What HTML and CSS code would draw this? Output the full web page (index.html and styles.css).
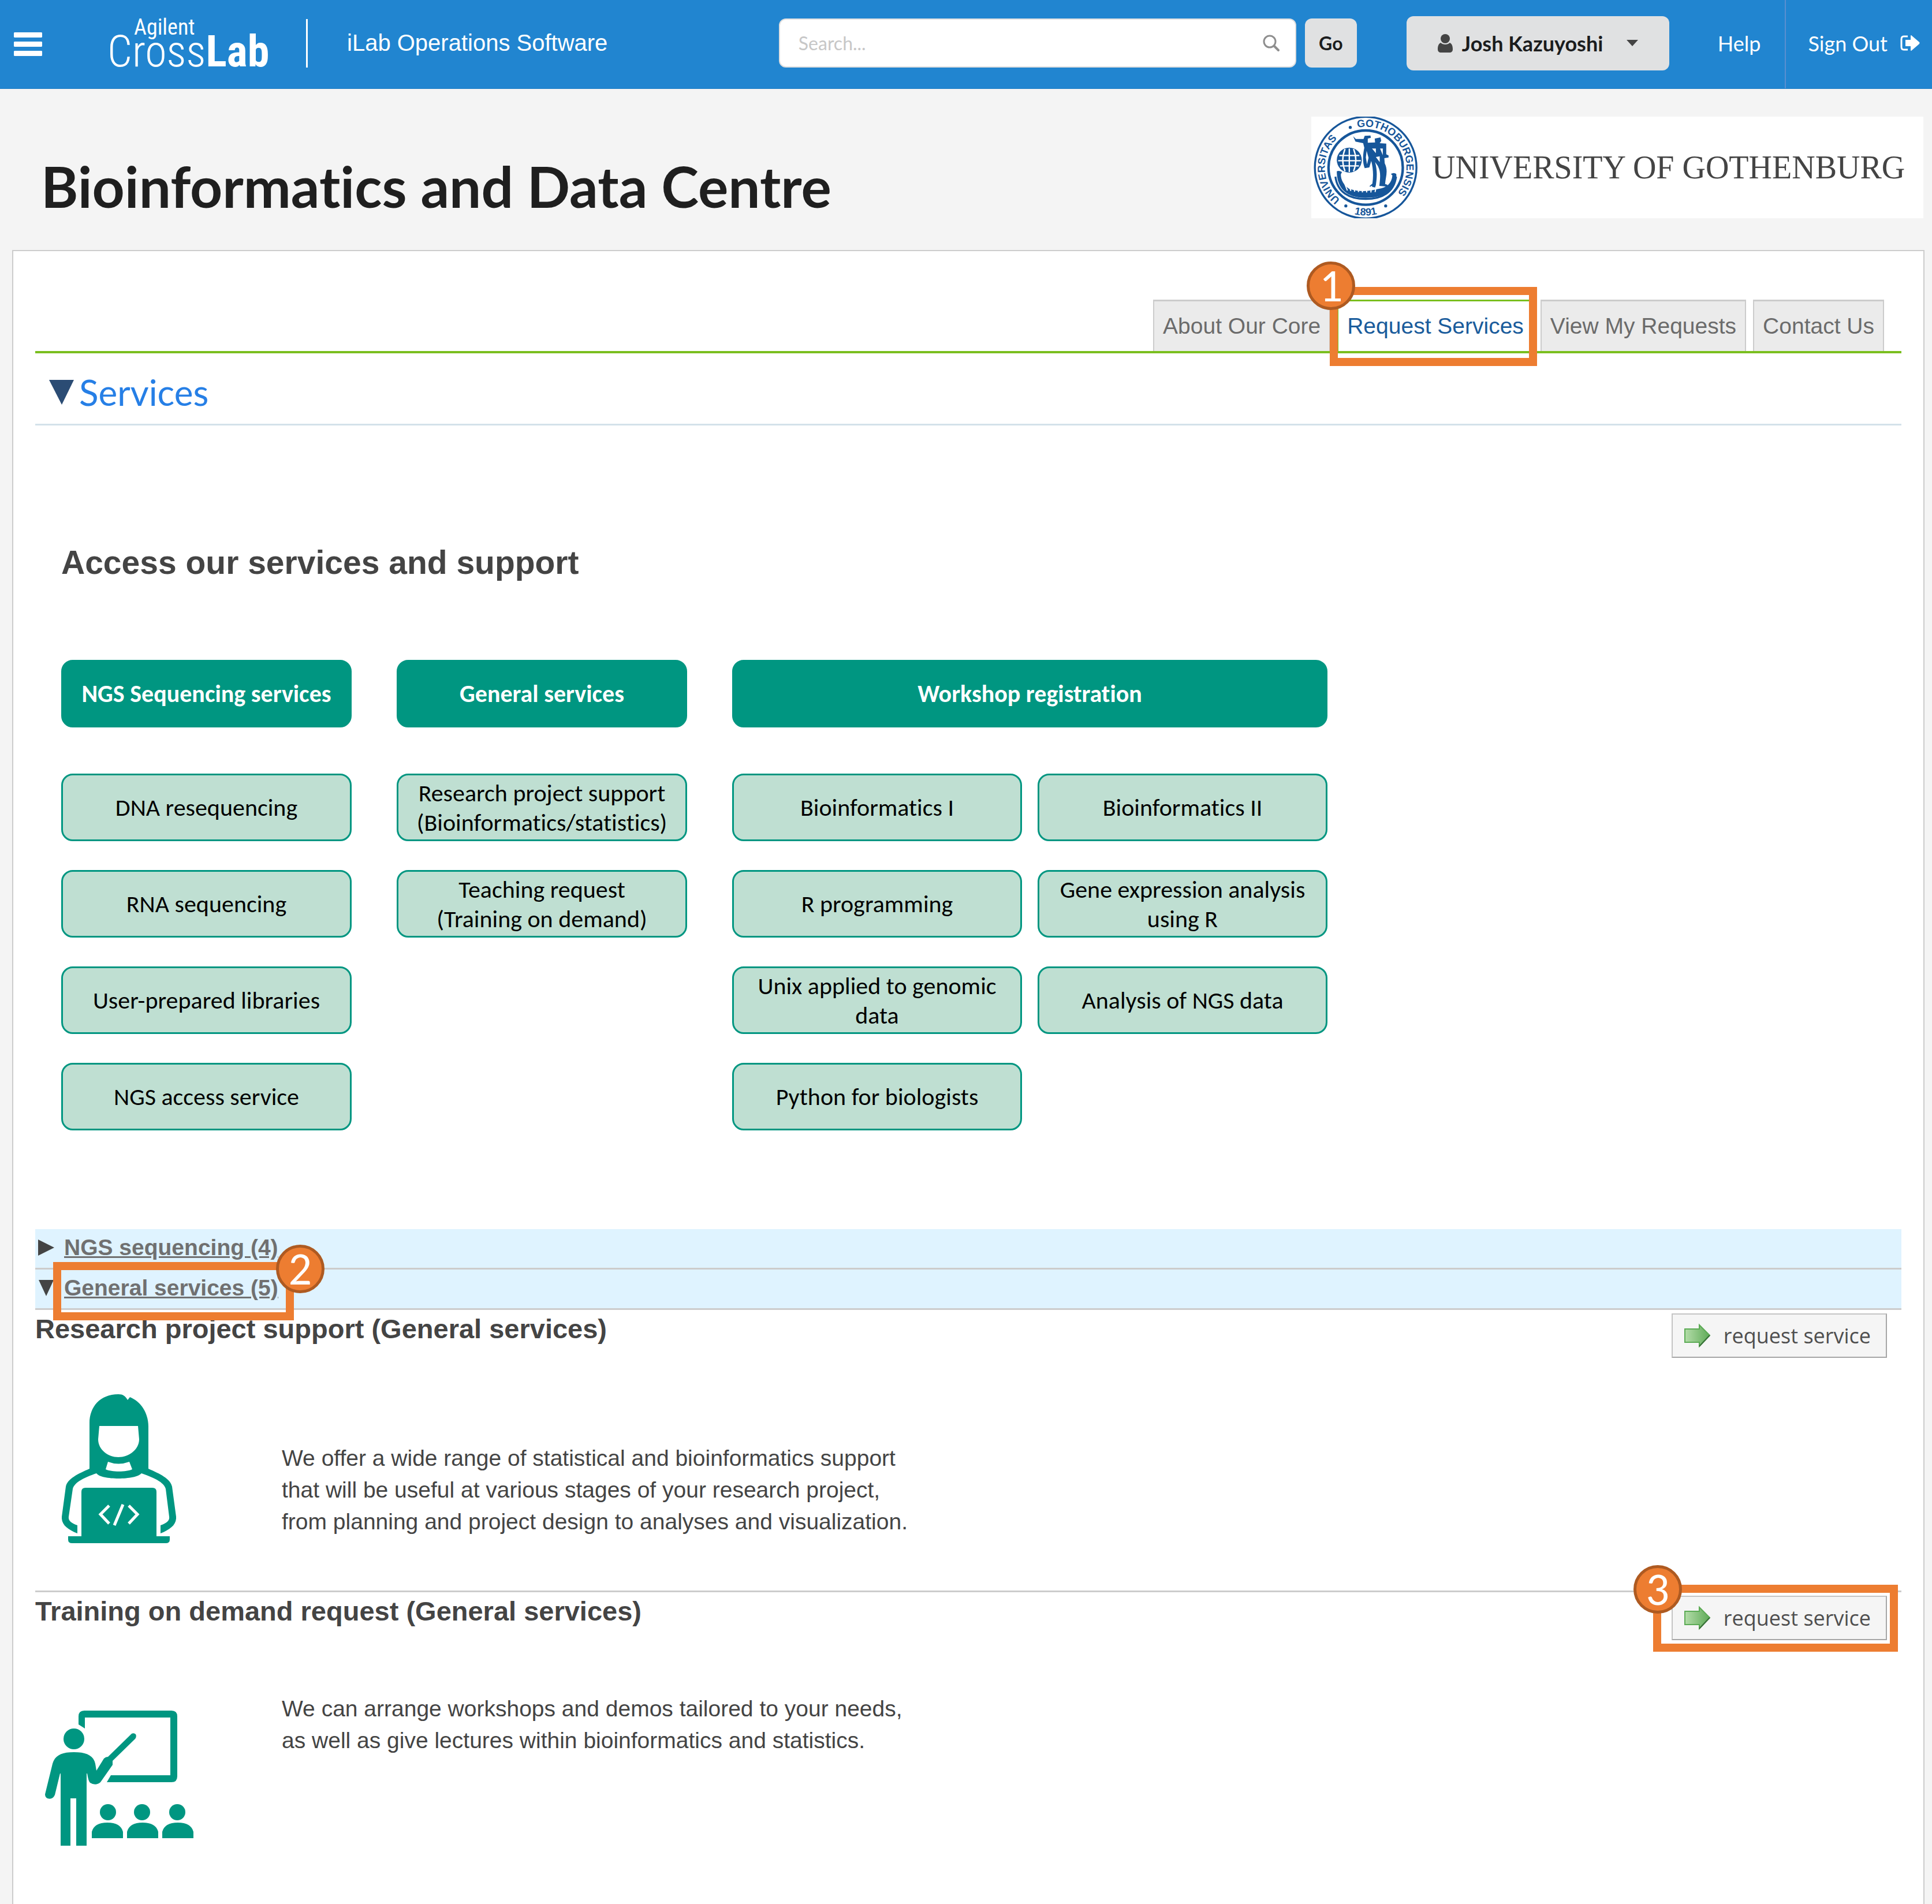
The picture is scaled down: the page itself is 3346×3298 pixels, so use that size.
FILE: index.html
```
<!DOCTYPE html>
<html lang="en">
<head>
<meta charset="utf-8">
<meta name="viewport" content="width=device-width, initial-scale=1">
<title>Bioinformatics and Data Centre - iLab Operations Software</title>
<link rel="stylesheet" href="styles.css">
</head>
<body>
<header class="topbar">
  <button class="menu-button" type="button" aria-label="Menu">
    <svg width="49" height="41" viewBox="0 0 49 41" aria-hidden="true"><path fill="#fff" d="M1 0h47l1 1v7l-1 1H1L0 8V1zM1 16h47l1 1v7l-1 1H1l-1-1v-7zM1 32h47l1 1v7l-1 1H1l-1-1v-7z"/></svg>
  </button>
  <a class="brand" href="#">
    <span class="brand-top">Agilent</span>
    <span class="brand-main">Cross<b>Lab</b></span>
  </a>
  <span class="product">iLab Operations Software</span>
  <form class="search" role="search">
    <div class="search-box">
      <input class="search-input" type="text" placeholder="Search..." aria-label="Search">
      <svg class="search-icon" width="30" height="30" viewBox="0 0 30 30" aria-hidden="true"><circle cx="12" cy="12" r="10" fill="none" stroke="#8e8e8e" stroke-width="3"/><path d="M20 20l7 7" stroke="#8e8e8e" stroke-width="4" stroke-linecap="round"/></svg>
    </div>
    <button class="go-button" type="button">Go</button>
  </form>
  <button class="user-button" type="button">
    <svg width="26" height="32" viewBox="0 0 26 32" aria-hidden="true"><ellipse cx="13" cy="8" rx="8" ry="8" fill="#444"/><path fill="#444" d="M5 15c2 2 5 3 8 3s6-1 8-3c4 2 5 7 5 11 0 4-2 6-6 6H6c-4 0-6-2-6-6 0-4 1-9 5-11z"/></svg>
    <span class="user-name">Josh Kazuyoshi</span>
    <svg width="20" height="11" viewBox="0 0 20 11" aria-hidden="true"><path fill="#444" d="M0 0h20L10 11z"/></svg>
  </button>
  <nav class="top-links">
    <a class="top-link" href="#">Help</a>
    <a class="top-link top-link-divided" href="#">Sign Out
      <svg width="34" height="28" viewBox="0 0 34 28" aria-hidden="true"><path d="M13 2H6C3 2 2 4 2 7v13c0 3 1 5 4 5h7" fill="none" stroke="#fff" stroke-width="3"/><path fill="#fff" d="M9 8h9V1q0-1 1-1l14 12q1 1 0 3L19 27q-1 0-1-1v-7H9z"/></svg>
    </a>
  </nav>
</header>

<section class="masthead">
  <h1 class="page-title">Bioinformatics and Data Centre</h1>
  <div class="university">
    <svg class="seal" width="187" height="176" viewBox="15 18 560 528" role="img" aria-label="University seal">
      <defs>
        <path id="ring" d="M297 495A212 212 0 0 1 297 71A212 212 0 0 1 297 495"/>
        <path id="ring-low" d="M48 283A249 249 0 0 0 546 283"/>
      </defs>
      <g fill="none" stroke="#16569a">
        <circle cx="297" cy="283" r="264" stroke-width="10"/>
        <circle cx="297" cy="283" r="193" stroke-width="13"/>
        <path d="M140 330C150 410 210 446 297 446S444 410 455 330" stroke-width="10"/>
      </g>
      <g class="seal-text" fill="#16569a">
        <text><textPath href="#ring" startOffset="142">UNIVERSITAS</textPath></text>
        <text><textPath href="#ring" startOffset="622">GOTHOBURGENSIS</textPath></text>
        <text text-anchor="middle"><textPath href="#ring-low" startOffset="50%">1891</textPath></text>
      </g>
      <g fill="#16569a"><circle cx="217" cy="74" r="8"/><circle cx="194" cy="482" r="8"/><circle cx="401" cy="482" r="8"/>
        <circle cx="212" cy="244" r="65"/>
        <path d="M147 302q12-6 27 4l-6 12c0 30 16 56 44 76q70 22 150 0c45-6 70-30 74-70l-8-8q16-10 28 0c6 60-30 124-159 124-100 0-150-50-150-138z"/>
        <path d="M232 120l14 14h40l6-16 30-2 2 12-16 4v22l38-2-2-20 30-6 4 18-8 12 34 2v56l12 6v10l-22 4 2 26c20 40 4 74 2 108l12 4v10l-42-4c4-40 10-70-8-104l-14-20c14 50 8 90 4 120l-4 12-30-6 16-14c6-40 4-80-6-118l-10 34-24 4c-12-30-10-70-2-106l-6-24-40-8z"/>
      </g>
      <path fill="none" stroke="#fff" stroke-width="7" d="M160 220h104M154 247h118M164 274h98M190 186q-24 58 0 116M212 184v122M234 186q24 58 0 116"/>
      <path fill="#fff" d="M302 196l10 36-8 34-6-36zM330 184h20v24zM372 184h14v34zM350 228l20-4v30z"/>
      <path fill="none" stroke="#fff" stroke-width="6" d="M178 340l24 62M206 356l14 48M232 366l8 42M256 376l4 34M280 378v34M304 378l-2 34M328 378l-4 34M352 380l-6 30"/>
    </svg>
    <span class="university-name">UNIVERSITY OF GOTHENBURG</span>
  </div>
</section>

<main class="panel">
  <nav class="tabs">
    <a class="tab" href="#">About Our Core</a>
    <a class="tab tab-active" href="#">Request Services<span class="mark mark-tab"><span class="mark-number">1</span></span></a>
    <a class="tab" href="#">View My Requests</a>
    <a class="tab" href="#">Contact Us</a>
  </nav>

  <h2 class="section-title">
    <svg width="43" height="43" viewBox="0 0 43 43" aria-hidden="true"><path fill="#2b4c74" d="M0 0h43L22 43z"/></svg>
    <a class="section-link" href="#">Services</a>
  </h2>

  <section class="access">
    <h3 class="access-title">Access our services and support</h3>
    <div class="chart">
      <div class="chart-group">
        <a class="box box-head" href="#">NGS Sequencing services</a>
        <div class="boxes">
          <a class="box" href="#">DNA resequencing</a>
          <a class="box" href="#">RNA sequencing</a>
          <a class="box" href="#">User-prepared libraries</a>
          <a class="box" href="#">NGS access service</a>
        </div>
      </div>
      <div class="chart-group">
        <a class="box box-head" href="#">General services</a>
        <div class="boxes">
          <a class="box" href="#">Research project support (Bioinformatics/statistics)</a>
          <a class="box" href="#">Teaching request<br>(Training on demand)</a>
        </div>
      </div>
      <div class="chart-group chart-group-wide">
        <a class="box box-head" href="#">Workshop registration</a>
        <div class="boxes boxes-two">
          <a class="box" href="#">Bioinformatics I</a>
          <a class="box" href="#">Bioinformatics II</a>
          <a class="box" href="#">R programming</a>
          <a class="box" href="#">Gene expression analysis using R</a>
          <a class="box" href="#">Unix applied to genomic data</a>
          <a class="box" href="#">Analysis of NGS data</a>
          <a class="box" href="#">Python for biologists</a>
        </div>
      </div>
    </div>
  </section>

  <div class="category">
    <svg width="28" height="28" viewBox="0 0 28 28" aria-hidden="true"><path fill="#444" d="M0 0l28 14L0 28z"/></svg>
    <a class="category-link" href="#">NGS sequencing (4)</a>
  </div>
  <div class="category">
    <svg width="28" height="28" viewBox="0 0 28 28" aria-hidden="true"><path fill="#444" d="M1 0h26L14 28z"/></svg>
    <a class="category-link" href="#">General services (5)<span class="mark mark-category"><span class="mark-number">2</span></span></a>
  </div>

  <article class="service">
    <div class="service-head">
      <h4 class="service-title">Research project support (General services)</h4>
      <button class="request-button" type="button">
        <svg width="46" height="43" viewBox="0 0 46 43" aria-hidden="true"><defs><linearGradient id="leaf" x1="0" x2="1"><stop offset="0" stop-color="#b4dda9"/><stop offset="1" stop-color="#5faa58"/></linearGradient></defs><path d="M1 10h25V3l18 18-18 19v-7H1z" fill="url(#leaf)" stroke="#5cab55" stroke-width="2"/><path d="M26 40l18-19" stroke="#376f37" stroke-width="2"/></svg>
        request service
      </button>
    </div>
    <div class="service-body">
      <div class="service-art">
        <svg width="198" height="258" viewBox="0 0 198 258" aria-hidden="true">
          <path fill="#009681" fill-rule="evenodd" d="M98 0C106 0 110 3 114 10L118 5C140 14 150 36 150 56V129C170 138 188 146 191 160L198 212C199 226 188 234 171 241V227C182 223 187 219 186 212L180 164C177 152 158 144 138 137C128 149 68 149 60 137C40 144 22 152 19 164L12 212C11 219 16 223 27 227V241C10 234-1 226 0 212L7 160C10 146 28 138 48 129V50C48 22 66 0 98 0ZM65 55L63 78C63 96 80 109 98 109S134 96 134 78L132 55ZM80 117L76 130C86 135 112 135 122 130L117 117Q98 124 80 117Z"/>
          <path fill="#009681" d="M41 162H157Q164 162 164 169V246H187V252Q187 258 180 258H18Q11 258 11 252V246H34V169Q34 162 41 162Z"/>
          <path fill="none" stroke="#fff" stroke-width="5" d="M82 193L67 208L82 224M106 191L91 227M116 193L131 208L116 224"/>
        </svg>
      </div>
      <p class="service-text service-text-low">We offer a wide range of statistical and bioinformatics support<br>that will be useful at various stages of your research project,<br>from planning and project design to analyses and visualization.</p>
    </div>
  </article>

  <article class="service">
    <div class="service-head">
      <h4 class="service-title">Training on demand request (General services)</h4>
      <button class="request-button" type="button">
        <svg width="46" height="43" viewBox="0 0 46 43" aria-hidden="true"><path d="M1 10h25V3l18 18-18 19v-7H1z" fill="url(#leaf)" stroke="#5cab55" stroke-width="2"/><path d="M26 40l18-19" stroke="#376f37" stroke-width="2"/></svg>
        request service
        <span class="mark mark-request"><span class="mark-number">3</span></span>
      </button>
    </div>
    <div class="service-body service-body-raised">
      <div class="service-art service-art-low">
        <svg width="257" height="234" viewBox="0 0 257 234" aria-hidden="true">
          <g fill="#009681">
            <path d="M58 24V10Q58 0 68 0H219Q229 0 229 10V114Q229 124 219 124H107L114 112H217V12H69V31Z"/>
            <circle cx="50" cy="49" r="18"/>
            <path d="M50 72C72 72 84 78 87 92L89 104L102 83Q105 80 109 80L150 40Q154 38 157 41Q159 45 156 49L117 87V94L96 124Q88 131 78 125Q75 122 73 109H72V234H54V152H44V234H27V109H26L17 146Q13 155 4 152Q0 150 0 145L13 92C17 78 28 72 50 72Z"/>
            <circle cx="109" cy="176" r="14"/><circle cx="168" cy="176" r="14"/><circle cx="229" cy="176" r="14"/>
            <path d="M81 221V210Q85 194 108 194T135 210V221ZM142 221V210Q146 194 169 194T196 210V221ZM203 221V210Q207 194 230 194T257 210V221Z"/>
          </g>
        </svg>
      </div>
      <p class="service-text">We can arrange workshops and demos tailored to your needs,<br>as well as give lectures within bioinformatics and statistics.</p>
    </div>
  </article>
</main>
</body>
</html>
```
FILE: styles.css
```
* { box-sizing: border-box; }

body {
  margin: 0;
  min-height: 100vh;
  display: flex;
  flex-direction: column;
  background: #f4f4f4;
  color: #444;
  font-family: "Liberation Sans", Arial, sans-serif;
  font-size: 39px;
}

h1, h2, h3, h4, p { margin: 0; }
a { color: inherit; text-decoration: none; }
button, input { font: inherit; color: inherit; margin: 0; }
svg { display: block; flex: none; }

/* Top bar */
.topbar {
  display: flex;
  align-items: center;
  height: 154px;
  padding-left: 24px;
  background: #2185d0;
  border-bottom: 1px solid #1c7cc4;
  color: #fff;
}
.menu-button { padding: 0; border: 0; background: none; }
.brand {
  display: flex;
  flex-direction: column;
  width: 347px;
  margin: 0 0 4px 113px;
  border-right: 3px solid #fff;
  font-family: "Roboto Condensed", Roboto, sans-serif;
}
.brand-top {
  padding-left: 46px;
  font-size: 38px;
  line-height: 28px;
}
.brand-main {
  font-size: 76px;
  font-weight: 300;
  line-height: 56px;
}
.brand-main b { font-weight: 700; }
.product { margin-left: 68px; font-size: 40px; padding-bottom: 4px; }

.search {
  display: flex;
  gap: 15px;
  margin: 0 0 4px auto;
}
.search-box {
  display: flex;
  align-items: center;
  width: 896px;
  height: 85px;
  padding: 0 26px 0 32px;
  background: #fff;
  border: 2px solid #dededf;
  border-radius: 12px;
}
.search-input {
  flex: 1;
  min-width: 0;
  padding: 0;
  border: 0;
  outline: 0;
  background: none;
  font-family: Lato, sans-serif;
  font-size: 32px;
}
.search-input::placeholder { color: #c7c7c7; opacity: 1; }
.go-button {
  width: 90px;
  padding: 0;
  border: 0;
  border-radius: 12px;
  background: #e0e1e2;
  color: #1b1c1d;
  font-family: Lato, sans-serif;
  font-size: 32px;
  font-weight: 700;
}
.user-button {
  display: flex;
  align-items: center;
  width: 455px;
  height: 94px;
  margin: 0 0 4px 86px;
  padding: 0 54px;
  gap: 16px;
  border: 0;
  border-radius: 12px;
  background: #e0e1e2;
  color: #1b1c1d;
  font-family: Lato, sans-serif;
  font-size: 36px;
  font-weight: 700;
}
.user-name { flex: 1; text-align: left; white-space: nowrap; }
.top-links {
  display: flex;
  align-self: stretch;
  margin-left: 46px;
  font-family: Lato, sans-serif;
  font-size: 36px;
}
.top-link {
  display: flex;
  align-items: center;
  gap: 22px;
  padding: 0 42px 3px 38px;
}
.top-link-divided { padding-right: 21px; border-left: 2px solid #5a8fd0; }

/* Title and university logo */
.masthead {
  display: flex;
  justify-content: space-between;
  align-items: flex-end;
  padding: 48px 15px 55px 71px;
}
.page-title {
  color: #1f1f1f;
  font-family: Lato, sans-serif;
  font-size: 98px;
  font-variant-ligatures: none;
  font-weight: 700;
  line-height: 112px;
}
.university {
  display: flex;
  align-items: center;
  gap: 22px;
  width: 1060px;
  background: #fff;
}
.seal-text {
  font-family: "Liberation Sans", Arial, sans-serif;
  font-size: 54px;
  font-weight: 700;
}
.university-name {
  color: #444;
  font-family: "Liberation Serif", "Times New Roman", serif;
  font-size: 56px;
  white-space: nowrap;
}

/* Main panel */
.panel {
  flex: 1;
  margin: 0 13px 0 21px;
  padding: 84px 38px 0;
  background: #fff;
  border: 2px solid #ccc;
  border-bottom: 0;
}
.tabs {
  display: flex;
  justify-content: flex-end;
  gap: 12px;
  padding-right: 30px;
  border-bottom: 4px solid #7abf1f;
}
.tab {
  padding: 21px 15px;
  border: 2px solid #ccc;
  border-top-width: 3px;
  border-bottom: 0;
  background: #ebebeb;
  color: #6b6b6b;
  line-height: 44px;
}
.tab-active {
  position: relative;
  background: #fff;
  border-color: #7abf1f;
  color: #1a5c9c;
}
.section-title {
  display: flex;
  align-items: center;
  gap: 9px;
  padding: 31px 24px 18px;
  border-bottom: 3px solid #d4e1ea;
  color: #267fe6;
  font-family: Lato, sans-serif;
  font-size: 62px;
  font-weight: 400;
  line-height: 73px;
}

/* Service chart */
.access { padding: 204px 45px 171px; }
.access-title {
  margin-bottom: 136px;
  font-size: 57px;
  line-height: 66px;
}
.chart { display: flex; gap: 78px; }
.chart-group {
  display: flex;
  flex-direction: column;
  gap: 80px;
  width: 503px;
}
.chart-group-wide { width: 1031px; }
.boxes { display: grid; gap: 50px 27px; }
.boxes-two { grid-template-columns: 1fr 1fr; }
.box {
  display: flex;
  align-items: center;
  justify-content: center;
  height: 117px;
  padding: 0 20px;
  background: #bfdfd2;
  border: 3px solid #009681;
  border-radius: 20px;
  color: #000;
  font-family: Carlito, Calibri, Lato, sans-serif;
  font-size: 42px;
  font-variant-ligatures: none;
  line-height: 51px;
  text-align: center;
}
.box-head {
  background: #009681;
  color: #fff;
  font-weight: 700;
}

/* Category bars */
.category {
  display: flex;
  align-items: center;
  gap: 17px;
  padding: 10px 5px 13px;
  background: #dff3ff;
  border-bottom: 3px solid #ccc;
}
.category-link {
  position: relative;
  color: #707070;
  font-weight: 700;
  line-height: 44px;
  text-decoration: underline;
}

/* Services */
.service { padding-top: 6px; }
.service + .service { border-top: 3px solid #ccc; }
.service-head {
  display: flex;
  justify-content: space-between;
  align-items: flex-start;
  padding-right: 25px;
}
.service-title { font-size: 47px; line-height: 54px; }
.request-button {
  position: relative;
  display: flex;
  align-items: center;
  gap: 22px;
  height: 77px;
  padding: 0 26px 0 20px;
  background: #f5f5f5;
  border: 2px solid #c4c4c4;
  border-right-color: #a6a6a6;
  border-bottom-color: #a6a6a6;
  color: #4f4f4f;
  font-family: "Open Sans", sans-serif;
  font-size: 36px;
}
.service-body {
  display: flex;
  align-items: flex-start;
  padding: 63px 0 82px;
}
.service-body-raised { padding-top: 91px; }
.service-art {
  display: flex;
  justify-content: center;
  width: 290px;
  margin-right: 137px;
}
.service-art-low { padding-top: 31px; }
.service-text { line-height: 55px; }
.service-text-low { padding-top: 83px; }

/* Numbered callouts laid over the controls */
.mark {
  position: absolute;
  z-index: 1;
  border: 14px solid #ed7d31;
  pointer-events: none;
}
.mark-tab { inset: -25px -8px -26px -15px; }
.mark-category { inset: -23px -27px -34px -19px; }
.mark-request { inset: -21px -21px -22px -34px; }
.mark-number {
  position: absolute;
  top: -58px;
  left: -54px;
  display: flex;
  align-items: center;
  justify-content: center;
  width: 84px;
  height: 84px;
  background: #ed7d31;
  border: 5px solid #ae5a21;
  border-radius: 50%;
  color: #fff;
  font-family: Carlito, Calibri, Lato, sans-serif;
  font-size: 80px;
  font-weight: 400;
  line-height: 74px;
}
.mark-category .mark-number { top: -44px; right: -67px; left: auto; }
.mark-request .mark-number { top: -48px; left: -48px; }
```
